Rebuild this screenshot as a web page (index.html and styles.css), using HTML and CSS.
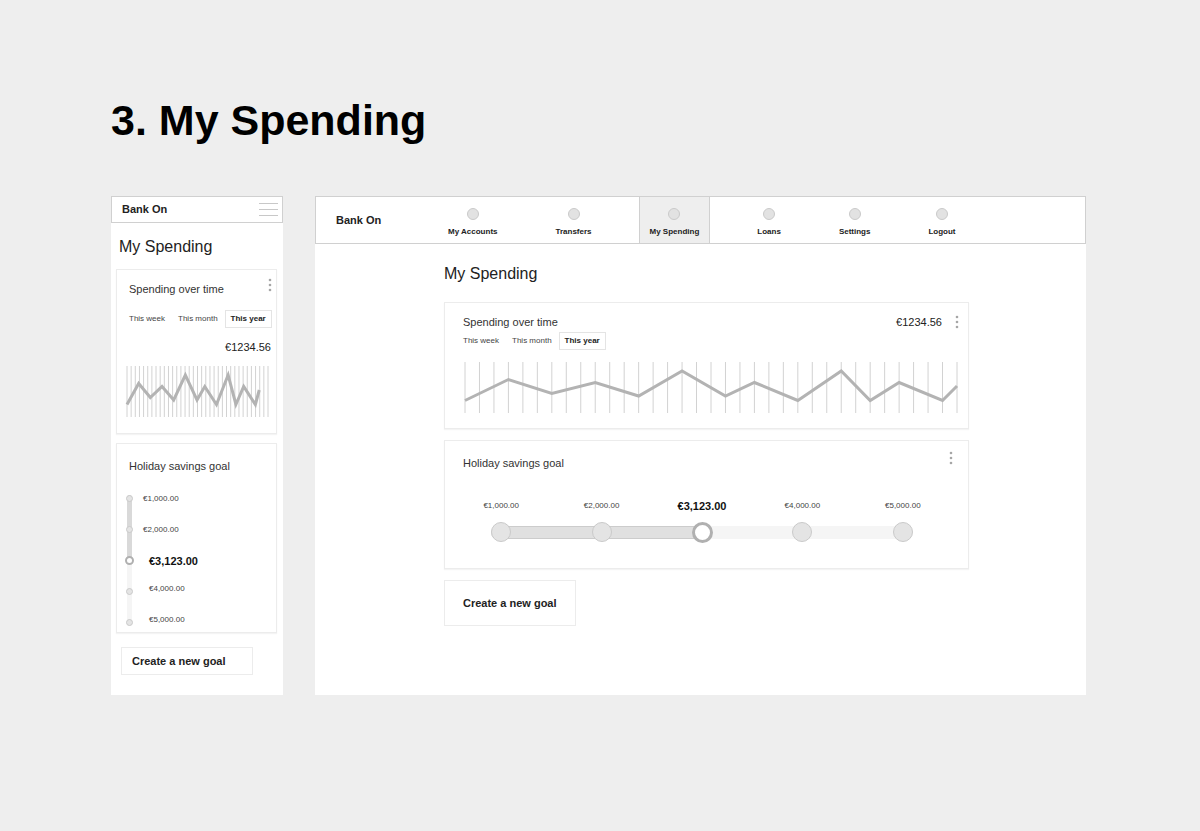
FILE: index.html
```html
<!DOCTYPE html>
<html lang="en">
  <head>
    <meta charset="UTF-8" />
    <meta name="viewport" content="width=device-width, initial-scale=1.0" />
    <title>Bank On - My Spending</title>
    <link rel="stylesheet" href="styles.css">
  </head>

  <body>
    <!-- shared shapes, one x unit per grid line -->
    <svg class="defs" width="0" height="0" aria-hidden="true">
      <defs>
        <path id="grid" vector-effect="non-scaling-stroke" d="M0 0v51m1-51v51m1-51v51m1-51v51m1-51v51m1-51v51m1-51v51m1-51v51m1-51v51m1-51v51m1-51v51m1-51v51m1-51v51m1-51v51m1-51v51m1-51v51m1-51v51m1-51v51m1-51v51m1-51v51m1-51v51m1-51v51m1-51v51m1-51v51m1-51v51m1-51v51m1-51v51m1-51v51m1-51v51m1-51v51m1-51v51m1-51v51m1-51v51m1-51v51m1-51v51" />
        <polyline id="line" vector-effect="non-scaling-stroke" points="0,38.5 3,17.5 6,31.5 9,20.5 12,34 15,9 18,34 20,20.5 23,38.5 26,9 28,38.5 30,20.5 33,38.5 34,24" />
        <g id="dots">
          <circle cx="4" cy="2" r="1.3" />
          <circle cx="4" cy="7" r="1.3" />
          <circle cx="4" cy="12" r="1.3" />
        </g>
      </defs>
    </svg>

    <h1 class="page-title">3. My Spending</h1>

    <div class="screens">
      <section class="screen mobile">
        <header class="topbar">
          <a class="brand" href="#">Bank On</a>
          <button class="menu" type="button" aria-label="Menu">
            <svg width="19" height="13" viewBox="0 0 19 13"><path d="M0 .5h19M0 6.5h19M0 12.5h19" /></svg>
          </button>
        </header>
        <main class="content">
          <h2>My Spending</h2>
          <section class="card spending">
            <div class="card-head">
              <h3>Spending over time</h3>
              <button class="more" type="button" aria-label="More"><svg width="8" height="14"><use href="#dots" /></svg></button>
            </div>
            <div class="tabs">
              <button type="button">This week</button>
              <button type="button">This month</button>
              <button type="button" class="active">This year</button>
            </div>
            <p class="amount">€1234.56</p>
            <svg class="chart" viewBox="0 0 34 51" preserveAspectRatio="none">
              <use class="grid" href="#grid" />
              <use class="line" href="#line" transform="scale(.938 1)" />
            </svg>
          </section>
          <section class="card goal">
            <div class="card-head">
              <h3>Holiday savings goal</h3>
            </div>
            <div class="slider">
              <input type="range" min="1000" max="5000" step="1000" value="3000" aria-label="Savings goal" />
              <ol>
                <li><i></i><span>€1,000.00</span></li>
                <li><i></i><span>€2,000.00</span></li>
                <li class="current"><i></i><span>€3,123.00</span></li>
                <li class="ahead"><i></i><span>€4,000.00</span></li>
                <li class="ahead"><i></i><span>€5,000.00</span></li>
              </ol>
            </div>
          </section>
          <button class="create" type="button">Create a new goal</button>
        </main>
      </section>

      <section class="screen desktop">
        <header class="topbar">
          <a class="brand" href="#">Bank On</a>
          <nav>
            <a href="#"><i></i>My Accounts</a>
            <a href="#"><i></i>Transfers</a>
            <a href="#" class="active"><i></i>My Spending</a>
            <a href="#"><i></i>Loans</a>
            <a href="#"><i></i>Settings</a>
            <a href="#"><i></i>Logout</a>
          </nav>
        </header>
        <main class="content">
          <h2>My Spending</h2>
          <section class="card spending">
            <div class="card-head">
              <h3>Spending over time</h3>
              <p class="amount">€1234.56</p>
              <button class="more" type="button" aria-label="More"><svg width="8" height="14"><use href="#dots" /></svg></button>
            </div>
            <div class="tabs">
              <button type="button">This week</button>
              <button type="button">This month</button>
              <button type="button" class="active">This year</button>
            </div>
            <svg class="chart" viewBox="0 0 34 51" preserveAspectRatio="none">
              <use class="grid" href="#grid" />
              <use class="line" href="#line" />
            </svg>
          </section>
          <section class="card goal">
            <div class="card-head">
              <h3>Holiday savings goal</h3>
              <button class="more" type="button" aria-label="More"><svg width="8" height="14"><use href="#dots" /></svg></button>
            </div>
            <div class="slider">
              <input type="range" min="1000" max="5000" step="1000" value="3000" aria-label="Savings goal" />
              <ol>
                <li><span>€1,000.00</span><i></i></li>
                <li><span>€2,000.00</span><i></i></li>
                <li class="current"><span>€3,123.00</span><i></i></li>
                <li><span>€4,000.00</span><i></i></li>
                <li><span>€5,000.00</span><i></i></li>
              </ol>
            </div>
          </section>
          <button class="create" type="button">Create a new goal</button>
        </main>
      </section>
    </div>
  </body>
</html>
```

FILE: styles.css
```css
* {
  box-sizing: border-box;
}
body {
  margin: 0;
  padding: 96px 114px 96px 111px;
  background: #eeeeee;
  color: #222;
  font-family: "Liberation Sans", Arial, sans-serif;
  font-size: 11px;
  line-height: 14px;
}
h1,
h2,
h3,
p,
ol {
  margin: 0;
  padding: 0;
}
button {
  padding: 0;
  border: none;
  background: none;
  color: inherit;
  font: inherit;
  cursor: pointer;
}
a {
  color: inherit;
  text-decoration: none;
}
svg {
  display: block;
}
.defs {
  position: absolute;
}
.page-title {
  margin-bottom: 52px;
  color: #000;
  font-size: 43px;
  line-height: 48px;
}
.screens {
  display: grid;
  grid-template-columns: 172fr 771fr;
  gap: 32px;
}
.screen {
  background: #fff;
}
.topbar {
  display: flex;
  align-items: center;
  border: 1px solid #d0d0d0;
}
.brand {
  font-weight: bold;
}
.content {
  display: flex;
  flex-direction: column;
  align-items: stretch;
}
h2 {
  font-size: 16px;
  font-weight: normal;
  line-height: 20px;
}
h3 {
  flex: 1;
  font-size: 11px;
  font-weight: normal;
  color: #333;
}
.card {
  border: 1px solid #ececec;
  box-shadow: 0 1px 1px #f4f4f4;
}
.card-head {
  display: flex;
  align-items: flex-start;
}
.more {
  fill: #a6a6a6;
}
.tabs {
  display: flex;
  gap: 1px;
  margin-left: -6px;
}
.tabs button {
  height: 18px;
  padding: 0 5px;
  border: 1px solid transparent;
  font-size: 8px;
  line-height: 16px;
  color: #444;
}
.tabs .active {
  border-color: #e4e4e4;
  font-weight: bold;
  color: #222;
}
.chart {
  height: 51px;
  overflow: visible;
  fill: none;
}
.chart .grid {
  stroke: #d2d2d2;
}
.chart .line {
  stroke: #b3b3b3;
  stroke-width: 3px;
}
.create {
  align-self: flex-start;
  border: 1px solid #ececec;
  font-weight: bold;
}

/* slider: the stops lie over the range input */
.slider {
  display: grid;
}
.slider ol,
.slider input {
  grid-area: 1 / 1;
}
.slider ol {
  list-style: none;
  pointer-events: none;
}
.slider li {
  display: flex;
  align-items: center;
  font-size: 8px;
  color: #444;
}
.slider i {
  border: 1px solid #cacaca;
  border-radius: 50%;
  background: #e4e4e4;
}
.slider .current {
  font-size: 11px;
  font-weight: bold;
  color: #111;
}
.slider .current i {
  visibility: hidden;
}
.slider input {
  margin: 0;
  appearance: none;
  background: none;
}
.slider input::-webkit-slider-thumb {
  appearance: none;
  box-sizing: border-box;
  border: 3px solid #b0b0b0;
  border-radius: 50%;
  background: #fff;
}

/* mobile */
.mobile .topbar {
  height: 27px;
  padding: 0 4px 1px 10px;
}
.mobile .brand {
  flex: 1;
}
.menu {
  stroke: #c8c8c8;
}
.mobile .content {
  padding: 14px 6px 20px 5px;
}
.mobile h2 {
  margin: 0 0 12px 3px;
}
.mobile .card {
  padding-left: 12px;
  padding-right: 2px;
}
.mobile .spending {
  margin-bottom: 9px;
  padding-top: 8px;
  padding-bottom: 16px;
}
.mobile .spending h3 {
  margin-top: 4px;
}
.mobile .tabs {
  margin-top: 14px;
}
.mobile .amount {
  margin: 12px 3px 12px 0;
  text-align: right;
}
.mobile .chart {
  width: calc(100% - 4px);
  margin-left: -2px;
}
.mobile .goal {
  padding-top: 15px;
  padding-bottom: 6px;
}
.mobile .slider {
  margin: 22px 0 0 -3px;
}
.mobile .slider ol {
  display: flex;
  flex-direction: column;
  justify-content: space-between;
  height: 131px;
}
.mobile .slider li {
  gap: 10px;
  height: 7px;
}
.mobile .slider i {
  width: 7px;
  height: 7px;
}
.mobile .current span,
.mobile .ahead span {
  margin-left: 6px;
}
.mobile .ahead span {
  margin-bottom: 6px;
}
.mobile .slider input {
  justify-self: start;
  width: 7px;
  height: 131px;
  writing-mode: vertical-lr;
}
.mobile input::-webkit-slider-runnable-track {
  width: 5px;
  margin: 0 auto;
  border-radius: 3px;
  background: linear-gradient(#d9d9d9 50%, #f5f5f5 50%);
}
.mobile input::-webkit-slider-thumb {
  width: 9px;
  height: 9px;
  margin-left: -2px;
  border-width: 2px;
}
.mobile .create {
  height: 28px;
  margin: 14px 0 0 5px;
  padding: 0 26px 0 10px;
}

/* desktop */
.desktop .topbar {
  height: 48px;
}
.desktop .brand {
  width: 121px;
  padding-left: 20px;
}
nav {
  display: flex;
  align-self: stretch;
  gap: 36px;
}
nav a {
  display: flex;
  flex-direction: column;
  align-items: center;
  gap: 5px;
  padding: 11px 10px 0;
  border: solid transparent;
  border-width: 0 1px;
  font-size: 8px;
  font-weight: bold;
}
nav .active {
  border-color: #d0d0d0;
  background: #eeeeee;
}
nav i {
  width: 12px;
  height: 12px;
  border: 1px solid #cacaca;
  border-radius: 50%;
  background: #e2e2e2;
}
.desktop .content {
  padding: 20px 117px 68px 129px;
}
.desktop h2 {
  margin-bottom: 18px;
}
.desktop .card {
  margin-bottom: 11px;
  padding-left: 18px;
  padding-right: 7px;
}
.desktop .spending {
  padding-top: 12px;
  padding-bottom: 15px;
}
.desktop .amount {
  margin-right: 11px;
}
.desktop .tabs {
  margin-top: 3px;
}
.desktop .chart {
  width: calc(100% - 6px);
  margin: 12px 4px 0 2px;
}
.desktop .goal {
  padding-top: 10px;
  padding-bottom: 26px;
}
.desktop .goal h3 {
  margin-top: 5px;
}
.desktop .goal .more {
  margin-right: 6px;
}
.desktop .slider {
  margin: 29px 8px 0 -12px;
}
.desktop .slider ol {
  display: grid;
  grid-template-columns: repeat(5, 1fr);
}
.desktop .slider li {
  flex-direction: column;
  gap: 9px;
}
.desktop .slider i {
  width: 20px;
  height: 20px;
}
.desktop .slider input {
  align-self: end;
  justify-self: center;
  width: calc(80% + 20px);
  height: 20px;
}
.desktop input::-webkit-slider-runnable-track {
  height: 13px;
  border-radius: 6px;
  background:
    linear-gradient(#e0e0e0, #e0e0e0) 0 50% / 50% 11px no-repeat,
    linear-gradient(#cccccc, #cccccc) 0 0 / 50% 100% no-repeat,
    #f5f5f5;
}
.desktop input::-webkit-slider-thumb {
  width: 21px;
  height: 21px;
  margin-top: -4px;
}
.desktop .create {
  height: 46px;
  padding: 0 18px;
}
```
